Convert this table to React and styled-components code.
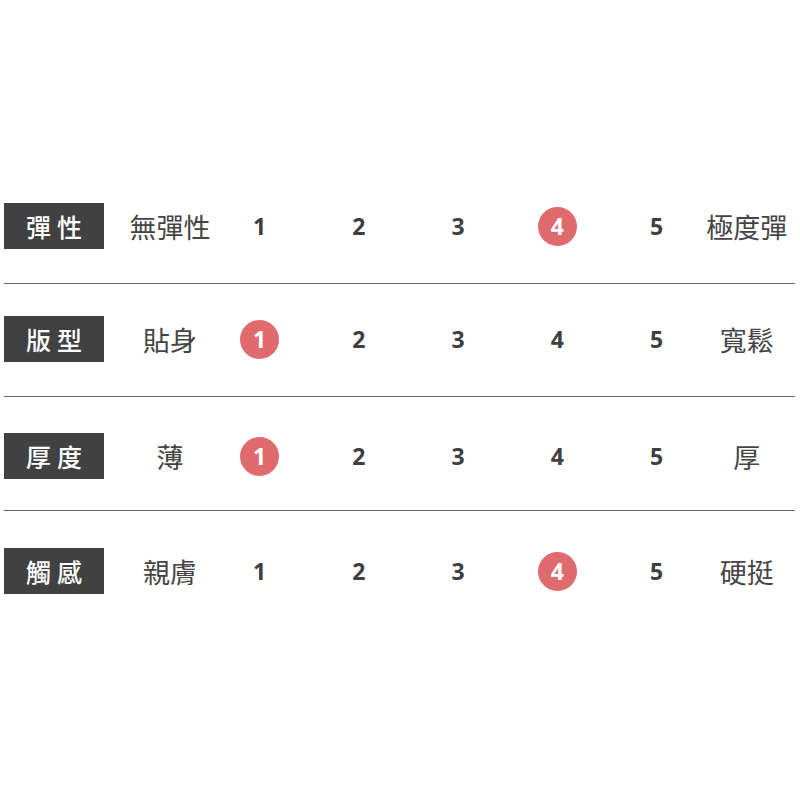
import React from 'react';
import styled, { createGlobalStyle } from 'styled-components';

const GlobalStyle = createGlobalStyle`
	html, body {
		margin: 0;
		padding: 0;
		background: #ffffff;
	}
	body {
		font-family: "Noto Sans CJK TC", "Noto Sans", sans-serif;
	}
`;

const Page = styled.div`
	width: 800px;
	height: 800px;
	padding: 203px 5px 0 4px;
	box-sizing: border-box;
`;

const Row = styled.div`
	display: grid;
	grid-template-columns: 100px 106px repeat(5, 99.25px) 84px;
	align-items: center;
	height: 46px;
`;

const Divider = styled.div`
	height: 1px;
	background: #666666;
	margin: ${(p) => p.above}px 0 ${(p) => p.below}px;
`;

const Label = styled.div`
	height: 46px;
	background: #414141;
	color: #ffffff;
	display: flex;
	align-items: center;
	justify-content: center;
	font-size: 25px;
	font-weight: 500;
	letter-spacing: 6px;
	padding-left: 6px;
	box-sizing: border-box;
`;

const EndText = styled.div`
	display: flex;
	justify-content: center;
	white-space: nowrap;
	font-size: 27px;
	color: #444444;
	padding-left: ${(p) => (p.left ? '26px' : '0')};
	padding-right: ${(p) => (p.left ? '0' : '3px')};
`;

const Cell = styled.div`
	display: flex;
	justify-content: center;
	align-items: center;
`;

const Num = styled.span`
	font-family: "Open Sans", "Liberation Sans", sans-serif;
	font-weight: 700;
	font-size: 23px;
	color: ${(p) => (p.active ? '#ffffff' : '#3f3f3f')};
	width: 39px;
	height: 39px;
	border-radius: 50%;
	background: ${(p) => (p.active ? '#e06b6f' : 'transparent')};
	display: flex;
	align-items: center;
	justify-content: center;
`;

// gaps around each divider line, taken from the picture
const gaps = [
	[34, 32],
	[34, 36],
	[31, 37]
];

const rows = [
	{ label: '彈性', low: '無彈性', high: '極度彈', value: 4 },
	{ label: '版型', low: '貼身', high: '寬鬆', value: 1 },
	{ label: '厚度', low: '薄', high: '厚', value: 1 },
	{ label: '觸感', low: '親膚', high: '硬挺', value: 4 }
];

function App() {
	return (
		<Page>
			<GlobalStyle />
			{rows.map((row, i) => (
				<React.Fragment key={row.label}>
					<Row>
						<Label>{row.label}</Label>
						<EndText left>{row.low}</EndText>
						{[1, 2, 3, 4, 5].map((n) => (
							<Cell key={n}>
								<Num active={n === row.value}>{n}</Num>
							</Cell>
						))}
						<EndText>{row.high}</EndText>
					</Row>
					{gaps[i] ? <Divider above={gaps[i][0]} below={gaps[i][1]} /> : null}
				</React.Fragment>
			))}
		</Page>
	);
}

export default App;
